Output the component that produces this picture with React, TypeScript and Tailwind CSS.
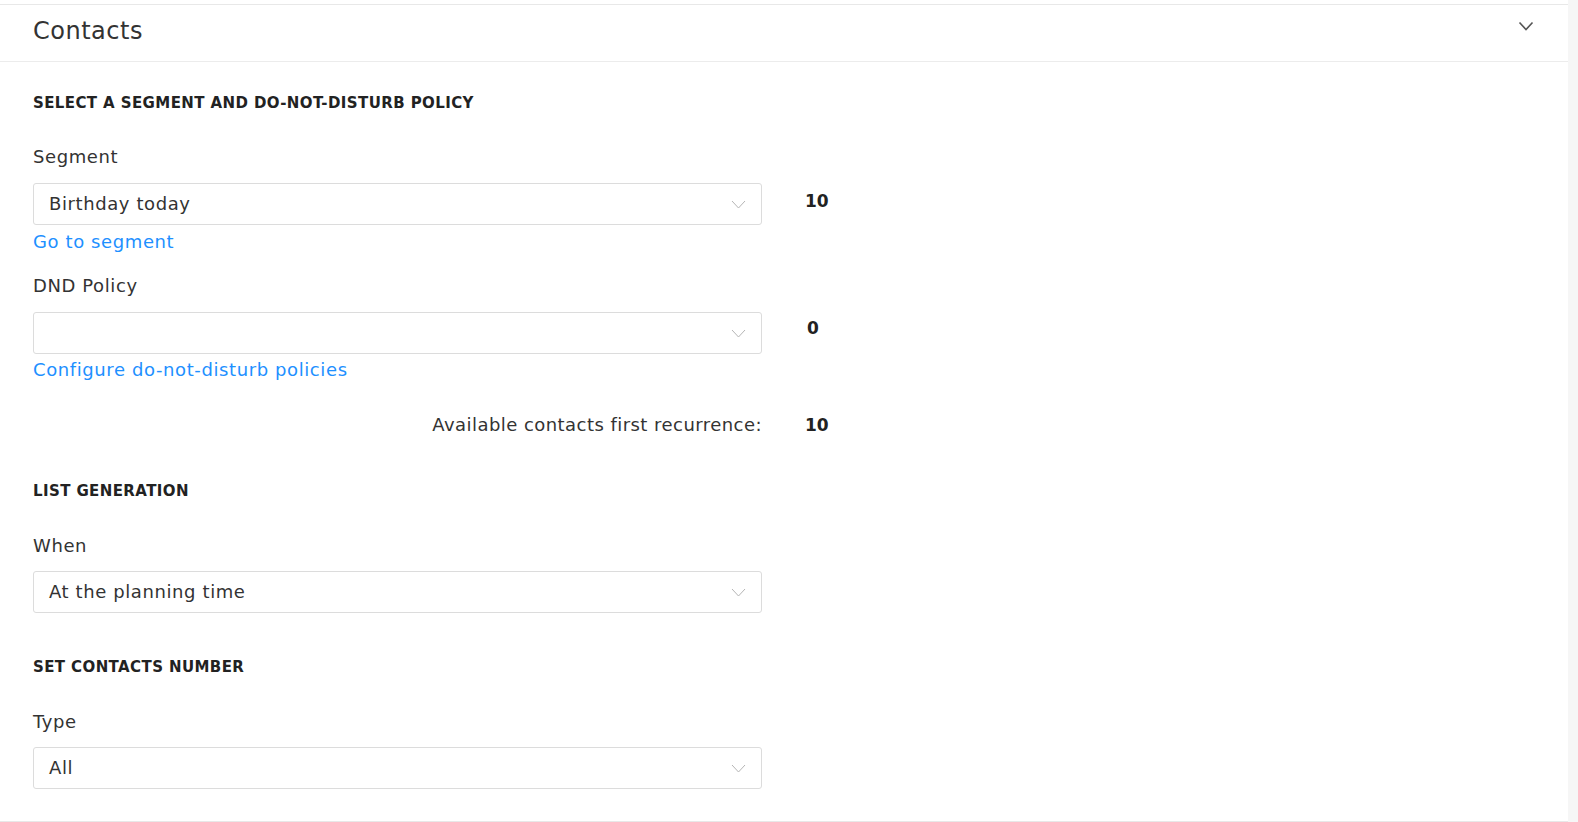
const FONT = "font-['DejaVu_Sans','Noto_Sans',sans-serif]"

function SelectBox({ value }: { value: string }) {
  return (
    <div className="flex items-center justify-between w-[729px] h-[42px] border border-[#dcdcdc] rounded-[3px] bg-white pl-[15px] pr-[15px] shrink-0">
      <span className="text-[18px] text-[#333] leading-none tracking-[0.6px]">{value}</span>
      <svg width="15" height="9" viewBox="0 0 15 9" fill="none" className="shrink-0">
        <path d="M1 1l6.5 7L14 1" stroke="#b5b5b5" strokeWidth="1" />
      </svg>
    </div>
  )
}

function SectionTitle({ children, className }: { children: string; className?: string }) {
  return (
    <div className={`text-[15px] font-bold text-[#222] leading-[20px] tracking-[0.4px] ${className ?? ''}`}>
      {children}
    </div>
  )
}

function Label({ children, className }: { children: string; className?: string }) {
  return (
    <div className={`text-[18px] text-[#333] leading-[24px] tracking-[0.6px] ${className ?? ''}`}>
      {children}
    </div>
  )
}

export default function App() {
  return (
    <div className={`${FONT} bg-[#f6f6f6] w-[1578px] h-[822px] overflow-hidden`}>
      <div className="w-[1568px] h-[822px] bg-white pt-[4px]">
        <div className="border-t border-b border-[#e8e8e8] h-[818px] flex flex-col">
          {/* Header */}
          <div className="h-[57px] flex justify-between border-b border-[#ececec] pl-[33px] pr-[34px]">
            <span className="text-[24px] text-[#333] leading-[56px] tracking-[0.5px] -mt-[2px]">Contacts</span>
            <svg width="16" height="10" viewBox="0 0 16 10" fill="none" className="mt-[16px]">
              <path d="M1.5 1.5l6.5 7 6.5-7" stroke="#555" strokeWidth="1.6" />
            </svg>
          </div>

          <div className="pl-[33px] flex flex-col">
            <SectionTitle className="mt-[31px]">SELECT A SEGMENT AND DO-NOT-DISTURB POLICY</SectionTitle>

            <Label className="mt-[32px]">Segment</Label>
            <div className="mt-[14px] flex items-center gap-[43px]">
              <SelectBox value="Birthday today" />
              <span className="text-[17px] font-bold text-[#222] -mt-[5px]">10</span>
            </div>
            <a className="mt-[5px] text-[18px] text-[#1e90ff] leading-[24px] tracking-[0.6px] w-fit">Go to segment</a>

            <Label className="mt-[20px]">DND Policy</Label>
            <div className="mt-[14px] flex items-center gap-[43px]">
              <SelectBox value="" />
              <span className="text-[17px] font-bold text-[#222] -mt-[8px] ml-[2px]">0</span>
            </div>
            <a className="mt-[4px] text-[18px] text-[#1e90ff] leading-[24px] tracking-[0.6px] w-fit">
              Configure do-not-disturb policies
            </a>

            <div className="mt-[31px] flex items-center">
              <div className="w-[729px] text-right text-[18px] text-[#333] leading-[24px] tracking-[0.45px]">
                Available contacts first recurrence:
              </div>
              <span className="ml-[43px] text-[17px] font-bold text-[#222] leading-[24px]">10</span>
            </div>

            <SectionTitle className="mt-[44px]">LIST GENERATION</SectionTitle>
            <Label className="mt-[33px]">When</Label>
            <div className="mt-[13px]">
              <SelectBox value="At the planning time" />
            </div>

            <SectionTitle className="mt-[44px]">SET CONTACTS NUMBER</SectionTitle>
            <Label className="mt-[33px]">Type</Label>
            <div className="mt-[13px]">
              <SelectBox value="All" />
            </div>
          </div>
        </div>
      </div>
    </div>
  )
}
